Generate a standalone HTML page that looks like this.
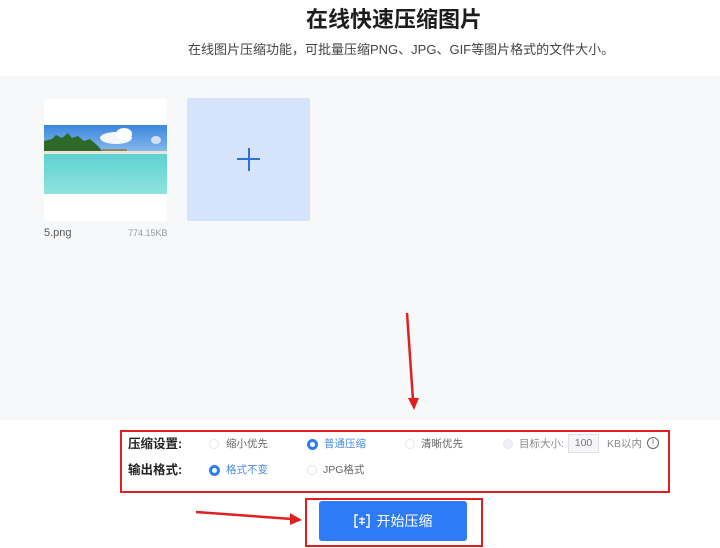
<!DOCTYPE html>
<html><head><meta charset="utf-8"><style>
*{margin:0;padding:0;box-sizing:border-box}
body{width:720px;height:548px;position:relative;background:#fff;font-family:"Liberation Sans","Noto Sans CJK SC",sans-serif;overflow:hidden;color:#333}
.abs{position:absolute}
.title{left:0;width:788px;top:5px;text-align:center;font-size:22px;font-weight:bold;color:#1d1d1f;line-height:30px}
.sub{left:188px;top:41px;font-size:13px;color:#444;line-height:18px;white-space:nowrap}
.gray{left:0;top:76px;width:720px;height:344px;background:#f7f8fa}
.card{left:44px;top:99px;width:123px;height:122px;background:#fff}
.plus{left:187px;top:98px;width:123px;height:123px;background:#d5e4fb;border-radius:2px}
.lab{font-size:10.5px;line-height:14px;white-space:nowrap}
.radio{width:10px;height:10px;border-radius:50%;border:1px solid #e4e6ea;background:#fff}
.on{border:3px solid #2f7bf5;background:#fff;width:11px;height:11px}
</style></head><body>
<div class="abs title">在线快速压缩图片</div>
<div class="abs sub">在线图片压缩功能，可批量压缩PNG、JPG、GIF等图片格式的文件大小。</div>
<div class="abs gray"></div>
<div class="abs card"></div>
<svg class="abs" style="left:44px;top:125px" width="123" height="69" viewBox="0 0 123 69">
<defs><linearGradient id="s" x1="0" y1="0" x2="0" y2="1"><stop offset="0" stop-color="#3d86dc"/><stop offset="1" stop-color="#8ec0ee"/></linearGradient>
<linearGradient id="w" x1="0" y1="0" x2="0" y2="1"><stop offset="0" stop-color="#5fd0d2"/><stop offset="1" stop-color="#8fe3de"/></linearGradient></defs>
<rect width="123" height="30" fill="url(#s)"/>
<ellipse cx="72" cy="13" rx="16" ry="6" fill="#f4f8fc"/>
<ellipse cx="80" cy="9" rx="8" ry="6" fill="#fff"/>
<ellipse cx="112" cy="15" rx="5" ry="4" fill="#cfe2f5"/>
<path d="M0 16 L8 14 L12 10 L18 13 L24 8 L28 13 L34 11 L40 16 L46 14 L55 22 L58 26 L0 27Z" fill="#2d6a2a"/>
<rect x="58" y="24" width="25" height="2" fill="#8a8470"/>
<rect y="26" width="123" height="3" fill="#e8e6d8"/>
<rect y="29" width="123" height="40" fill="url(#w)"/>
</svg>
<div class="abs lab" style="left:44px;top:226px;color:#555;font-size:11px">5.png</div>
<div class="abs lab" style="left:128px;top:226px;color:#999;font-size:9px">774.15KB</div>
<div class="abs plus"></div>
<div class="abs" style="left:237px;top:158px;width:23px;height:2px;background:#2f6fd6"></div>
<div class="abs" style="left:248px;top:148px;width:2px;height:23px;background:#2f6fd6"></div>
<svg class="abs" style="left:0;top:0" width="720" height="548">
<line x1="407" y1="313" x2="413" y2="400" stroke="#e02020" stroke-width="2.5"/>
<polygon points="408,398 419,398 414,410" fill="#e02020"/>
<line x1="196" y1="512" x2="292" y2="519" stroke="#e02020" stroke-width="2.5"/>
<polygon points="290,513 302,520 290,525" fill="#e02020"/>
</svg>
<div class="abs" style="left:120px;top:430px;width:550px;height:63px;border:2px solid #e02020"></div>
<div class="abs lab" style="left:128px;top:437px;font-weight:bold;font-size:12.5px;color:#222">压缩设置:</div>
<div class="abs radio" style="left:209px;top:439px"></div><div class="abs lab" style="left:226px;top:437px;color:#666">缩小优先</div>
<div class="abs radio on" style="left:307px;top:439px"></div><div class="abs lab" style="left:324px;top:437px;color:#4a8ae6">普通压缩</div>
<div class="abs radio" style="left:405px;top:439px"></div><div class="abs lab" style="left:421px;top:437px;color:#666">清晰优先</div>
<div class="abs radio" style="left:503px;top:439px;background:#eef0f3"></div><div class="abs lab" style="left:519px;top:437px;color:#888">目标大小:</div>
<div class="abs lab" style="left:568px;top:434px;width:31px;height:19px;border:1px solid #dcdfe6;background:#f5f6f8;color:#777;text-align:center;line-height:17px">100</div>
<div class="abs lab" style="left:607px;top:437px;color:#888">KB以内</div>
<div class="abs" style="left:647px;top:437px;width:12px;height:12px;border:1px solid #666;border-radius:50%;font-size:9px;line-height:10px;text-align:center;color:#666">!</div>
<div class="abs lab" style="left:128px;top:463px;font-weight:bold;font-size:12.5px;color:#222">输出格式:</div>
<div class="abs radio on" style="left:209px;top:465px"></div><div class="abs lab" style="left:226px;top:463px;color:#4a8ae6">格式不变</div>
<div class="abs radio" style="left:307px;top:465px"></div><div class="abs lab" style="left:323px;top:463px;color:#666">JPG格式</div>
<div class="abs" style="left:305px;top:498px;width:178px;height:49px;border:2px solid #e02020"></div>
<div class="abs" style="left:319px;top:501px;width:148px;height:40px;background:#2f7bf5;border-radius:3px;color:#fff;font-size:14px;line-height:40px;text-align:center">
<svg width="16" height="14" viewBox="0 0 16 14" style="vertical-align:-2px;margin-right:7px"><path d="M4 1H1V13H4M12 1H15V13H12" stroke="#fff" stroke-width="1.4" fill="none"/><path d="M8 3V11M5 5H11M5 8.5H11" stroke="#fff" stroke-width="1.2"/></svg>开始压缩</div>
</body></html>
